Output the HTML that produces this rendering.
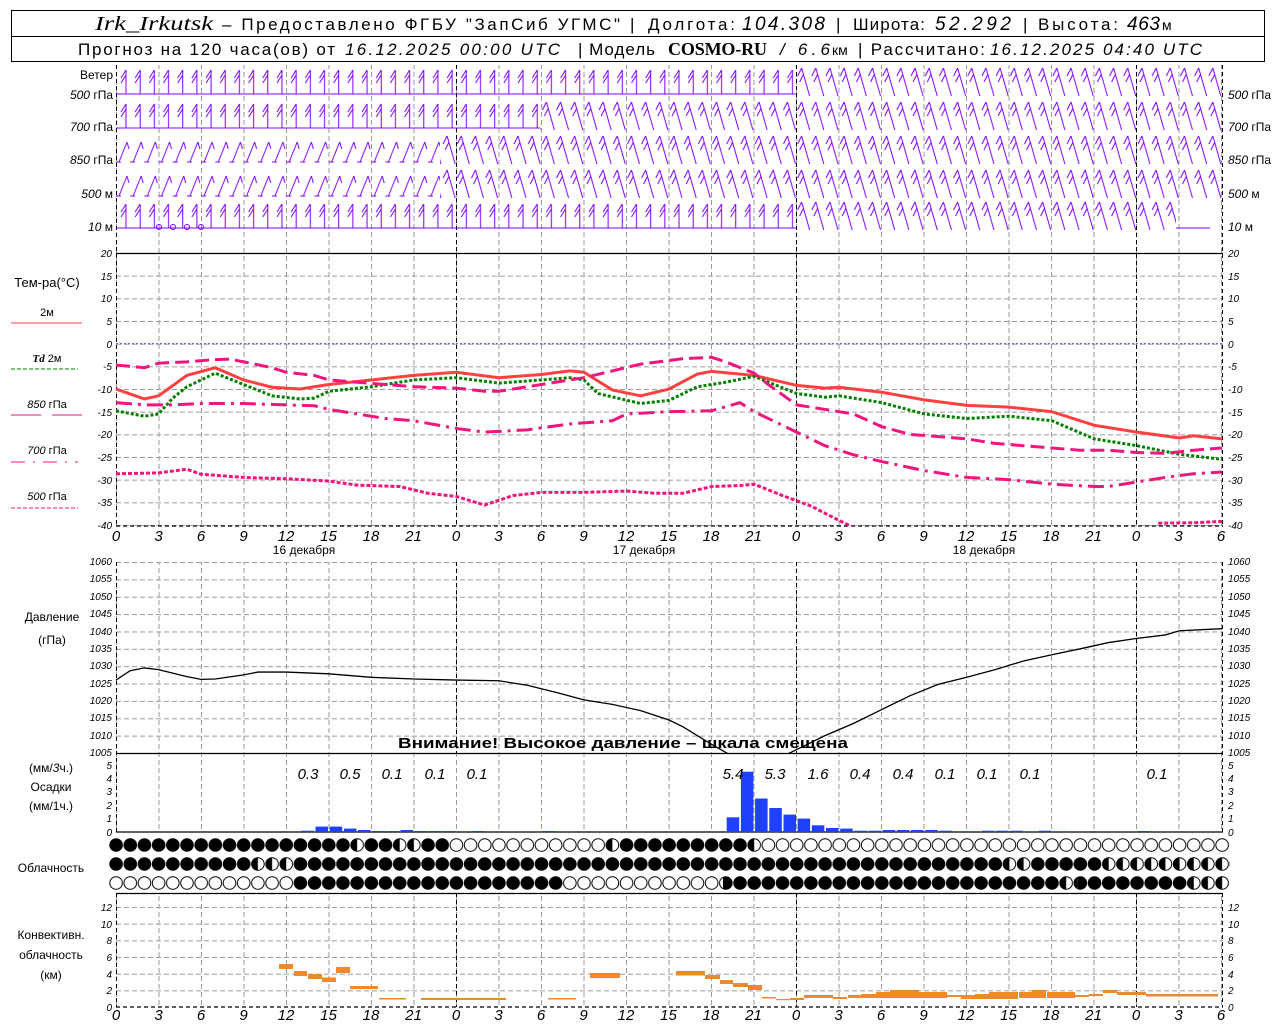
<!DOCTYPE html>
<html><head><meta charset="utf-8"><style>
html,body{margin:0;padding:0;background:#fff;}
svg{display:block;font-family:"Liberation Sans","DejaVu Sans",sans-serif;}
.it{font-style:italic}
.ax{font-size:10px;font-style:italic;fill:#000}
.lb{font-size:12px;fill:#000}
.hl{font-size:15px;font-style:italic;fill:#000;text-anchor:middle}
</style></head><body>
<svg width="1280" height="1024" viewBox="0 0 1280 1024" xmlns="http://www.w3.org/2000/svg">
<defs>
<pattern id="vg" x="116" y="0" width="42.5" height="8" patternUnits="userSpaceOnUse"><line x1="0.5" y1="0" x2="0.5" y2="5" stroke="#9a9a9a" stroke-width="1"/></pattern>
<pattern id="hT" x="116" y="253" width="8" height="22.667" patternUnits="userSpaceOnUse"><line x1="0" y1="0.5" x2="5" y2="0.5" stroke="#9a9a9a"/></pattern>
<pattern id="hP" x="116" y="562" width="8" height="17.364" patternUnits="userSpaceOnUse"><line x1="0" y1="0.5" x2="5" y2="0.5" stroke="#9a9a9a"/></pattern>
<pattern id="hC" x="116" y="907" width="8" height="16.667" patternUnits="userSpaceOnUse"><line x1="0" y1="0.5" x2="5" y2="0.5" stroke="#9a9a9a"/></pattern>
<pattern id="wA" x="116" y="0" width="14.18" height="40" patternUnits="userSpaceOnUse"><path d="M5,2 L13,30 M5,2 L1,10 M7,8 L3,16" stroke="#8000ff" fill="none" stroke-width="1"/></pattern>
<pattern id="wB" x="116" y="0" width="14.18" height="40" patternUnits="userSpaceOnUse"><path d="M10,4 L10,28 M10,4 L5,12 M10,9 L5,17 M0,28 H14.2" stroke="#8000ff" fill="none" stroke-width="1"/></pattern>
<pattern id="wC" x="116" y="0" width="14.18" height="40" patternUnits="userSpaceOnUse"><path d="M3,28 L11,8 M11,8 L13,15 M0,28 H5" stroke="#8000ff" fill="none" stroke-width="1"/></pattern>
<pattern id="cB" x="109" y="0" width="14.18" height="20" patternUnits="userSpaceOnUse"><circle cx="7.09" cy="7" r="6.3" fill="#000" stroke="#000"/></pattern>
<pattern id="cW" x="109" y="0" width="14.18" height="20" patternUnits="userSpaceOnUse"><circle cx="7.09" cy="7" r="6.3" fill="#fff" stroke="#000"/></pattern>
<pattern id="cH" x="109" y="0" width="14.18" height="20" patternUnits="userSpaceOnUse"><circle cx="7.09" cy="7" r="6.3" fill="#fff" stroke="#000"/><path d="M7.09,0.7 A6.3,6.3 0 0,0 7.09,13.3 Z" fill="#000"/></pattern>
</defs>
<rect width="1280" height="1024" fill="#fff"/>

<!-- header -->
<rect x="11.5" y="10.5" width="1253" height="51" fill="none" stroke="#000"/>
<line x1="11" y1="36.5" x2="1265" y2="36.5" stroke="#000"/>
<g font-size="17" fill="#000">
<text x="95" y="30" textLength="118" lengthAdjust="spacingAndGlyphs" font-family="Liberation Serif,serif" font-style="italic" font-size="20">Irk_Irkutsk</text>
<text x="222" y="30" textLength="398" lengthAdjust="spacing">– Предоставлено ФГБУ "ЗапСиб УГМС"</text>
<text x="630" y="30">|</text>
<text x="648" y="30" textLength="87" lengthAdjust="spacing">Долгота:</text>
<text x="742" y="30" textLength="83" lengthAdjust="spacing" class="it" font-size="19">104.308</text>
<text x="836" y="30">|</text>
<text x="853" y="30" textLength="72" lengthAdjust="spacing">Широта:</text>
<text x="935" y="30" textLength="76" lengthAdjust="spacing" class="it" font-size="19">52.292</text>
<text x="1023" y="30">|</text>
<text x="1038" y="30" textLength="80" lengthAdjust="spacing">Высота:</text>
<text x="1127" y="30" textLength="33" lengthAdjust="spacing" class="it" font-size="19">463</text>
<text x="1162" y="30" font-size="14">м</text>
<text x="78" y="55" textLength="257" lengthAdjust="spacing">Прогноз на 120 часа(ов) от</text>
<text x="345" y="55" textLength="215" lengthAdjust="spacing" class="it">16.12.2025 00:00 UTC</text>
<text x="578" y="55" textLength="77" lengthAdjust="spacing">| Модель</text>
<text x="668" y="55" textLength="99" lengthAdjust="spacing" font-family="Liberation Serif,serif" font-weight="bold" font-size="18">COSMO-RU</text>
<text x="780" y="55" textLength="50" lengthAdjust="spacing" class="it">/ 6.6</text>
<text x="832" y="55" font-size="14">км</text>
<text x="858" y="55" textLength="127" lengthAdjust="spacing">| Рассчитано:</text>
<text x="990" y="55" textLength="212" lengthAdjust="spacing" class="it">16.12.2025 04:40 UTC</text>
</g>

<!-- grids -->
<rect x="116" y="65" width="1107" height="188" fill="url(#vg)"/>
<rect x="116" y="253" width="1107" height="273" fill="url(#vg)"/>
<rect x="116" y="253" width="1107" height="273" fill="url(#hT)"/>
<rect x="116" y="562" width="1107" height="191" fill="url(#vg)"/>
<rect x="116" y="562" width="1107" height="191" fill="url(#hP)"/>
<rect x="116" y="753" width="1107" height="79" fill="url(#vg)"/>
<rect x="116" y="893" width="1107" height="114" fill="url(#vg)"/>
<rect x="116" y="907" width="1107" height="100" fill="url(#hC)"/>
<line x1="116" y1="343.7" x2="1222" y2="343.7" stroke="#2040ff" stroke-dasharray="2 2"/>
<g stroke="#000" stroke-dasharray="4 3" stroke-width="1">
<path d="M116.5,65 V526 M456.5,65 V526 M796.5,65 V526 M1136.5,65 V526 M1222.5,65 V526"/>
<path d="M116.5,562 V832 M456.5,562 V753 M796.5,562 V753 M1136.5,562 V753 M1222.5,562 V832"/>
<path d="M116.5,893 V1007 M456.5,893 V1007 M796.5,893 V1007 M1136.5,893 V1007 M1222.5,893 V1007"/>
</g>
<g stroke="#000" stroke-width="1.2">
<line x1="116" y1="253.5" x2="1223" y2="253.5"/>
<line x1="116" y1="753.5" x2="1223" y2="753.5"/>
<line x1="116" y1="832" x2="1223" y2="832"/>
<line x1="116" y1="893.5" x2="1223" y2="893.5"/>
<line x1="116" y1="1007" x2="1223" y2="1007" stroke-dasharray="4 3"/>
<line x1="116" y1="526" x2="1223" y2="526" stroke-dasharray="4 3"/>
</g>

<!-- wind -->
<g transform="translate(0,66)"><rect x="116" y="0" width="680" height="32" fill="url(#wB)"/><rect x="796" y="0" width="426" height="36" fill="url(#wA)"/></g>
<g transform="translate(0,100)"><rect x="116" y="0" width="424" height="32" fill="url(#wB)"/><rect x="540" y="0" width="682" height="34" fill="url(#wA)"/></g>
<g transform="translate(0,134)"><rect x="116" y="0" width="324" height="32" fill="url(#wC)"/><rect x="440" y="0" width="782" height="34" fill="url(#wA)"/></g>
<g transform="translate(0,168)"><rect x="116" y="0" width="324" height="34" fill="url(#wC)"/><rect x="440" y="0" width="782" height="34" fill="url(#wA)"/></g>
<g transform="translate(0,200)"><rect x="116" y="0" width="680" height="30" fill="url(#wB)"/><rect x="796" y="0" width="380" height="30" fill="url(#wA)"/></g>
<line x1="1176" y1="228" x2="1210" y2="228" stroke="#8000ff"/>
<g fill="none" stroke="#8000ff"><circle cx="159" cy="227" r="2.5"/><circle cx="173" cy="227" r="2.5"/><circle cx="187" cy="227" r="2.5"/><circle cx="201" cy="227" r="2.5"/></g>

<!-- wind labels -->
<g class="lb" font-size="11" text-anchor="end">
<text x="113" y="79">Ветер</text>
<text x="113" y="99"><tspan class="it">500</tspan> гПа</text>
<text x="113" y="131"><tspan class="it">700</tspan> гПа</text>
<text x="113" y="164"><tspan class="it">850</tspan> гПа</text>
<text x="113" y="198"><tspan class="it">500</tspan> м</text>
<text x="113" y="231"><tspan class="it">10</tspan>   м</text>
</g>
<g class="lb" font-size="11">
<text x="1228" y="99"><tspan class="it">500</tspan> гПа</text>
<text x="1228" y="131"><tspan class="it">700</tspan> гПа</text>
<text x="1228" y="164"><tspan class="it">850</tspan> гПа</text>
<text x="1228" y="198"><tspan class="it">500</tspan> м</text>
<text x="1228" y="231"><tspan class="it">10</tspan>   м</text>
</g>

<!-- temp axis labels -->
<g class="ax" text-anchor="end">
<text x="112" y="257">20</text><text x="112" y="280">15</text><text x="112" y="302">10</text><text x="112" y="325">5</text><text x="112" y="348">0</text><text x="112" y="370">-5</text><text x="112" y="393">-10</text><text x="112" y="416">-15</text><text x="112" y="438">-20</text><text x="112" y="461">-25</text><text x="112" y="484">-30</text><text x="112" y="506">-35</text><text x="112" y="529">-40</text>
</g>
<g class="ax">
<text x="1228" y="257">20</text><text x="1228" y="280">15</text><text x="1228" y="302">10</text><text x="1228" y="325">5</text><text x="1228" y="348">0</text><text x="1228" y="370">-5</text><text x="1228" y="393">-10</text><text x="1228" y="416">-15</text><text x="1228" y="438">-20</text><text x="1228" y="461">-25</text><text x="1228" y="484">-30</text><text x="1228" y="506">-35</text><text x="1228" y="529">-40</text>
</g>

<!-- temp legend -->
<g class="lb" text-anchor="middle">
<text x="47" y="287" font-size="13">Тем-ра(°C)</text>
<text x="47" y="316" font-size="11">2м</text>
<text x="47" y="362" font-size="11"><tspan class="it" font-weight="bold" font-family="Liberation Serif,serif">Td</tspan>  2м</text>
<text x="47" y="408" font-size="11"><tspan class="it">850</tspan> гПа</text>
<text x="47" y="454" font-size="11"><tspan class="it">700</tspan> гПа</text>
<text x="47" y="500" font-size="11"><tspan class="it">500</tspan> гПа</text>
</g>
<line x1="11" y1="323" x2="82" y2="323" stroke="#ff4040"/>
<line x1="11" y1="369" x2="78" y2="369" stroke="#008000" stroke-dasharray="4 2"/>
<line x1="11" y1="415" x2="82" y2="415" stroke="#f0167e" stroke-dasharray="30 11"/>
<line x1="11" y1="462" x2="78" y2="462" stroke="#f0167e" stroke-dasharray="14 8 2 8"/>
<line x1="11" y1="508" x2="78" y2="508" stroke="#f0167e" stroke-dasharray="4 2"/>

<!-- temp curves -->
<svg x="116" y="253" width="1107" height="273" overflow="hidden">
<g transform="translate(0,90.7) scale(14.18,-4.533)" fill="none">
<polyline vector-effect="non-scaling-stroke" stroke="#ff4040" stroke-width="3" points="0,-10 2,-12.2 3,-11.5 5,-7 7,-5.3 9,-8 11,-9.6 13,-10 15,-9 18,-8 21,-7 24,-6.3 27,-7.5 30,-6.8 32,-6 33,-6.3 35,-10.2 37,-11.5 39,-10 41,-6.7 42,-6.1 45,-7 48,-9.2 50,-9.8 51,-9.6 54,-10.7 57,-12.4 60,-13.6 63,-14 66,-15 69,-18 72,-19.5 75,-20.8 76,-20.3 78,-21"/>
<polyline vector-effect="non-scaling-stroke" stroke="#008000" stroke-width="3" stroke-dasharray="3 2" points="0,-14.8 2,-16 3,-15.5 4,-12 5,-9.5 7,-6.5 9,-9 11,-11.5 13,-12.2 14,-12 15,-10.5 18,-9.5 21,-8 24,-7.5 27,-8.7 30,-8 32,-7.5 33,-8 34,-11 37,-13.2 39,-12.5 41,-9.5 43,-8.5 45,-7.2 48,-11 50,-11.8 51,-11.5 54,-13 57,-15.5 60,-16.5 63,-16 66,-17 69,-21 72,-22.5 75,-24.4 78,-25.5"/>
<polyline vector-effect="non-scaling-stroke" stroke="#f0167e" stroke-width="3" stroke-dasharray="14 6" points="0,-4.7 2,-5.3 3,-4.3 5,-4 7,-3.5 8,-3.4 9,-4 11,-5.3 12,-6.3 14,-7 15,-8 17,-8.5 19,-9 21,-9.5 24,-9.8 26,-10.5 27,-10.5 29,-9.5 31,-8.5 33,-7.5 35,-6 37,-4.5 40,-3.3 42,-3 43,-4 45,-6.5 46,-9 48,-13.5 50,-14.5 52,-15.5 54,-18.3 56,-20 58,-20.5 60,-21 62,-22 64,-22.5 66,-23 68,-23.5 70,-23.5 72,-24 74,-24.2 76,-23.5 78,-23"/>
<polyline vector-effect="non-scaling-stroke" stroke="#f0167e" stroke-width="3" stroke-dasharray="16 6 3 6" points="0,-13 2,-13.5 4,-13.5 6,-13.2 9,-13.2 12,-13.5 14,-13.7 15,-14.5 17,-15.5 19,-16.5 21,-17 24,-18.7 26,-19.5 29,-19 32,-17.7 35,-17 36,-15.5 39,-15 42,-14.8 44,-13 45,-15 48,-19.5 50,-22.5 52,-24.5 54,-26 57,-28 60,-29.5 63,-30 66,-31 69,-31.5 70,-31.5 72,-30.5 74,-29.5 76,-28.7 78,-28.3"/>
<polyline vector-effect="non-scaling-stroke" stroke="#f0167e" stroke-width="3" stroke-dasharray="4 2" points="0,-28.7 3,-28.5 5,-27.7 6,-28.8 9,-29.5 12,-29.8 15,-30.3 17,-31.2 20,-31.5 22,-33 24,-33.7 26,-35.6 28,-33.5 30,-32.8 33,-32.8 36,-32.5 38,-33 40,-33 42,-31.5 44,-31.3 45,-31 47,-33.5 49,-35.8 51,-39 52,-40.5"/>
<polyline vector-effect="non-scaling-stroke" stroke="#f0167e" stroke-width="3" stroke-dasharray="4 2" points="73.5,-39.6 76,-39.5 78,-39.2"/>
</g></svg>

<!-- hour labels -->
<g class="hl">
<text x="116" y="541">0</text><text x="158.5" y="541">3</text><text x="201" y="541">6</text><text x="243.5" y="541">9</text><text x="286" y="541">12</text><text x="328.5" y="541">15</text><text x="371" y="541">18</text><text x="413.5" y="541">21</text><text x="456" y="541">0</text><text x="498.5" y="541">3</text><text x="541" y="541">6</text><text x="583.5" y="541">9</text><text x="626" y="541">12</text><text x="668.5" y="541">15</text><text x="711" y="541">18</text><text x="753.5" y="541">21</text><text x="796" y="541">0</text><text x="838.5" y="541">3</text><text x="881" y="541">6</text><text x="923.5" y="541">9</text><text x="966" y="541">12</text><text x="1008.5" y="541">15</text><text x="1051" y="541">18</text><text x="1093.5" y="541">21</text><text x="1136" y="541">0</text><text x="1178.5" y="541">3</text><text x="1221" y="541">6</text>
</g>
<g class="hl">
<text x="116" y="1020">0</text><text x="158.5" y="1020">3</text><text x="201" y="1020">6</text><text x="243.5" y="1020">9</text><text x="286" y="1020">12</text><text x="328.5" y="1020">15</text><text x="371" y="1020">18</text><text x="413.5" y="1020">21</text><text x="456" y="1020">0</text><text x="498.5" y="1020">3</text><text x="541" y="1020">6</text><text x="583.5" y="1020">9</text><text x="626" y="1020">12</text><text x="668.5" y="1020">15</text><text x="711" y="1020">18</text><text x="753.5" y="1020">21</text><text x="796" y="1020">0</text><text x="838.5" y="1020">3</text><text x="881" y="1020">6</text><text x="923.5" y="1020">9</text><text x="966" y="1020">12</text><text x="1008.5" y="1020">15</text><text x="1051" y="1020">18</text><text x="1093.5" y="1020">21</text><text x="1136" y="1020">0</text><text x="1178.5" y="1020">3</text><text x="1221" y="1020">6</text>
</g>
<g class="lb" font-size="13" text-anchor="middle">
<text x="304" y="554">16 декабря</text><text x="644" y="554">17 декабря</text><text x="984" y="554">18 декабря</text>
</g>

<!-- pressure -->
<g class="ax" font-size="9" text-anchor="end">
<text x="112" y="565">1060</text><text x="112" y="582">1055</text><text x="112" y="600">1050</text><text x="112" y="617">1045</text><text x="112" y="635">1040</text><text x="112" y="652">1035</text><text x="112" y="669">1030</text><text x="112" y="687">1025</text><text x="112" y="704">1020</text><text x="112" y="721">1015</text><text x="112" y="739">1010</text><text x="112" y="756">1005</text>
</g>
<g class="ax" font-size="9">
<text x="1228" y="565">1060</text><text x="1228" y="582">1055</text><text x="1228" y="600">1050</text><text x="1228" y="617">1045</text><text x="1228" y="635">1040</text><text x="1228" y="652">1035</text><text x="1228" y="669">1030</text><text x="1228" y="687">1025</text><text x="1228" y="704">1020</text><text x="1228" y="721">1015</text><text x="1228" y="739">1010</text><text x="1228" y="756">1005</text>
</g>
<g class="lb" font-size="12" text-anchor="middle"><text x="52" y="621">Давление</text><text x="52" y="644">(гПа)</text></g>
<svg x="116" y="562" width="1107" height="192" overflow="hidden">
<g transform="translate(0,191) scale(14.18,-3.4727)" fill="none">
<polyline vector-effect="non-scaling-stroke" stroke="#000" stroke-width="1.3" points="0,21 1,23.7 2,24.5 3,24 5,22 6,21.2 7,21.3 9,22.5 10,23.3 12,23.3 15,22.8 18,21.8 21,21.3 24,21 27,20.8 29,19.5 31,17.5 33,15.3 35,14 37,12.2 39,9.5 40,7.5 42,2.5 43.5,-1"/>
<polyline vector-effect="non-scaling-stroke" stroke="#000" stroke-width="1.3" points="47,-1 48,1 50,5 52,8.5 54,12.5 56,16.5 58,19.8 60,21.8 62,24 64,26.5 66,28.3 68,30 70,31.8 72,33 74,34 75,35.2 78,35.8"/>
</g></svg>
<text x="398" y="748" font-size="15" font-weight="bold" textLength="450" lengthAdjust="spacingAndGlyphs">Внимание! Высокое давление – шкала смещена</text>

<!-- precip -->
<g class="lb" font-size="12" text-anchor="middle"><text x="51" y="772">(мм/<tspan class="it">3</tspan>ч.)</text><text x="51" y="791">Осадки</text><text x="51" y="810">(мм/1ч.)</text></g>
<g class="ax" text-anchor="end"><text x="112" y="769">5</text><text x="112" y="782">4</text><text x="112" y="795">3</text><text x="112" y="809">2</text><text x="112" y="822">1</text><text x="112" y="836">0</text></g>
<g class="ax"><text x="1228" y="769">5</text><text x="1228" y="782">4</text><text x="1228" y="795">3</text><text x="1228" y="809">2</text><text x="1228" y="822">1</text><text x="1228" y="836">0</text></g>
<g fill="#2040ff">
<rect x="301.3" y="830.7" width="12.5" height="1.3"/><rect x="315.5" y="826.6" width="12.5" height="5.4"/><rect x="329.7" y="826.6" width="12.5" height="5.4"/><rect x="343.9" y="828.6" width="12.5" height="3.4"/><rect x="358" y="830" width="12.5" height="2"/><rect x="372.2" y="831" width="12.5" height="1"/><rect x="386.4" y="831" width="12.5" height="1"/><rect x="400.6" y="830" width="12.5" height="2"/><rect x="414.8" y="831" width="12.5" height="1"/><rect x="429" y="831" width="12.5" height="1"/><rect x="443" y="831" width="12.5" height="1"/><rect x="471.5" y="831" width="12.5" height="1"/><rect x="542.4" y="831" width="12.5" height="1"/>
<rect x="726.7" y="817.3" width="12.5" height="14.7"/><rect x="740.9" y="771.7" width="12.5" height="60.3"/><rect x="755.1" y="798.5" width="12.5" height="33.5"/><rect x="769.3" y="808" width="12.5" height="24"/><rect x="783.5" y="814.6" width="12.5" height="17.4"/><rect x="797.6" y="818.6" width="12.5" height="13.4"/><rect x="811.8" y="825.3" width="12.5" height="6.7"/><rect x="826" y="828" width="12.5" height="4"/><rect x="840.2" y="828.6" width="12.5" height="3.4"/><rect x="854.4" y="830.7" width="12.5" height="1.3"/><rect x="868.5" y="830.7" width="12.5" height="1.3"/><rect x="882.7" y="830" width="12.5" height="2"/><rect x="896.9" y="830" width="12.5" height="2"/><rect x="911.1" y="830" width="12.5" height="2"/><rect x="925.3" y="830" width="12.5" height="2"/><rect x="939.4" y="830.7" width="12.5" height="1.3"/><rect x="953.6" y="831.2" width="12.5" height="0.8"/><rect x="967.8" y="831.2" width="12.5" height="0.8"/><rect x="982" y="830.7" width="12.5" height="1.3"/><rect x="996.2" y="830.7" width="12.5" height="1.3"/><rect x="1010.3" y="830.7" width="12.5" height="1.3"/><rect x="1024.5" y="831.2" width="12.5" height="0.8"/><rect x="1038.7" y="830.7" width="12.5" height="1.3"/><rect x="1052.9" y="831.2" width="12.5" height="0.8"/><rect x="1138" y="831" width="12.5" height="1"/>
</g>
<g class="hl" font-size="13">
<text x="308" y="779">0.3</text><text x="350" y="779">0.5</text><text x="392" y="779">0.1</text><text x="435" y="779">0.1</text><text x="477" y="779">0.1</text><text x="733" y="779">5.4</text><text x="775" y="779">5.3</text><text x="818" y="779">1.6</text><text x="860" y="779">0.4</text><text x="903" y="779">0.4</text><text x="945" y="779">0.1</text><text x="987" y="779">0.1</text><text x="1030" y="779">0.1</text><text x="1157" y="779">0.1</text>
</g>

<!-- cloud -->
<text x="51" y="872" class="lb" font-size="12" text-anchor="middle">Облачность</text>
<g transform="translate(0,838)">
<rect x="109" y="0" width="241" height="14" fill="url(#cB)"/>
<rect x="350" y="0" width="14.2" height="14" fill="url(#cH)"/>
<rect x="364.2" y="0" width="28.4" height="14" fill="url(#cB)"/>
<rect x="392.6" y="0" width="28.4" height="14" fill="url(#cH)"/>
<rect x="421" y="0" width="28.4" height="14" fill="url(#cB)"/>
<rect x="449.4" y="0" width="156" height="14" fill="url(#cW)"/>
<rect x="605.4" y="0" width="14.2" height="14" fill="url(#cH)"/>
<rect x="619.6" y="0" width="127.6" height="14" fill="url(#cB)"/>
<rect x="747.2" y="0" width="14.2" height="14" fill="url(#cH)"/>
<rect x="761.4" y="0" width="468" height="14" fill="url(#cW)"/>
</g>
<g transform="translate(0,857)">
<rect x="109" y="0" width="142" height="14" fill="url(#cB)"/>
<rect x="251" y="0" width="42.5" height="14" fill="url(#cH)"/>
<rect x="293.5" y="0" width="710" height="14" fill="url(#cB)"/>
<rect x="1003.5" y="0" width="28.4" height="14" fill="url(#cH)"/>
<rect x="1031.9" y="0" width="70.9" height="14" fill="url(#cB)"/>
<rect x="1102.8" y="0" width="127" height="14" fill="url(#cH)"/>
</g>
<g transform="translate(0,876)">
<rect x="109" y="0" width="184.3" height="14" fill="url(#cW)"/>
<rect x="293.3" y="0" width="269.4" height="14" fill="url(#cB)"/>
<rect x="562.7" y="0" width="160.3" height="14" fill="url(#cW)"/>
<rect x="723" y="0" width="340" height="14" fill="url(#cB)"/>
<rect x="1063" y="0" width="14.2" height="14" fill="url(#cH)"/>
<rect x="1077.2" y="0" width="113.4" height="14" fill="url(#cB)"/>
<rect x="1190.6" y="0" width="38.6" height="14" fill="url(#cH)"/>
</g>

<!-- convective -->
<g class="lb" font-size="12" text-anchor="middle"><text x="51" y="939">Конвективн.</text><text x="51" y="959">облачность</text><text x="51" y="979">(км)</text></g>
<g class="ax" text-anchor="end"><text x="112" y="911">12</text><text x="112" y="928">10</text><text x="112" y="944">8</text><text x="112" y="961">6</text><text x="112" y="978">4</text><text x="112" y="994">2</text><text x="112" y="1011">0</text></g>
<g class="ax"><text x="1228" y="911">12</text><text x="1228" y="928">10</text><text x="1228" y="944">8</text><text x="1228" y="961">6</text><text x="1228" y="978">4</text><text x="1228" y="994">2</text><text x="1228" y="1011">0</text></g>
<g fill="#f0882c">
<rect x="279" y="964" width="14" height="5"/><rect x="294" y="971" width="13" height="5"/><rect x="308" y="974" width="14" height="5"/><rect x="322" y="977.5" width="14" height="4.5"/><rect x="336" y="967" width="14" height="6"/><rect x="350" y="986" width="28" height="3"/><rect x="379" y="998" width="27" height="1.5"/><rect x="421" y="998" width="85" height="2"/><rect x="548" y="998" width="28" height="1.5"/>
<rect x="590" y="973" width="30" height="5"/><rect x="676" y="971" width="29" height="4.5"/><rect x="705" y="975" width="15" height="4"/><rect x="720" y="980" width="13" height="4"/><rect x="733" y="983" width="15" height="4"/><rect x="748" y="985" width="14" height="5"/><rect x="762" y="997" width="14" height="1.5"/><rect x="776" y="999" width="14" height="1.2"/><rect x="790" y="998" width="14" height="2"/>
<rect x="804" y="995" width="29" height="3"/><rect x="833" y="997" width="14" height="2"/><rect x="848" y="995" width="13" height="3"/><rect x="861" y="994" width="15" height="4"/><rect x="876" y="992" width="14" height="6"/><rect x="890" y="990" width="29" height="8"/><rect x="919" y="992" width="28" height="6"/><rect x="947" y="995" width="14" height="2"/><rect x="961" y="995" width="14" height="4"/><rect x="975" y="994" width="14" height="5"/><rect x="989" y="992" width="29" height="7"/><rect x="1019" y="992" width="13" height="6"/><rect x="1032" y="990" width="14" height="8"/><rect x="1047" y="992" width="28" height="6"/><rect x="1075" y="995" width="14" height="2"/><rect x="1089" y="994" width="14" height="2"/><rect x="1103" y="990" width="14" height="3"/><rect x="1117" y="992" width="29" height="3"/><rect x="1146" y="994" width="72" height="2.5"/>
</g>
</svg>
</body></html>
